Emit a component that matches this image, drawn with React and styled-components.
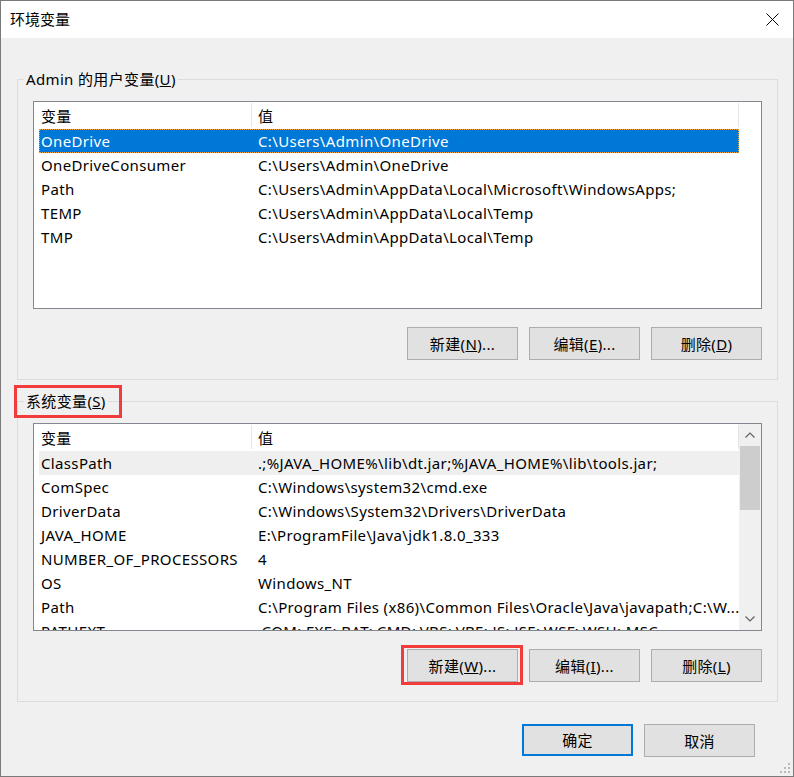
import styled, { createGlobalStyle, css } from 'styled-components'

const GlobalStyle = createGlobalStyle`
  html, body {
    margin: 0;
    padding: 0;
    background: #f0f0f0;
  }
  * {
    box-sizing: border-box;
  }
`

const Window = styled.div`
  position: relative;
  width: 794px;
  height: 777px;
  border: 1px solid #7a7a7a;
  background: #f0f0f0;
  display: flex;
  flex-direction: column;
  font-family: "Segoe UI", "Noto Sans", "Noto Sans CJK SC", sans-serif;
  font-size: 15px;
  letter-spacing: 0.35px;
  color: #000;
`

const TitleBar = styled.div`
  height: 37px;
  flex-shrink: 0;
  background: #fff;
  display: flex;
  align-items: center;
  justify-content: space-between;
  padding: 0 14px 1px 9px;
`

const Title = styled.span`
  line-height: 20px;
  letter-spacing: 0;
`

const Body = styled.div`
  flex: 1;
  display: flex;
  flex-direction: column;
  padding: 30px 15px 0 16px;
`

const Group = styled.fieldset`
  margin: ${({ $gap }) => $gap || 0}px 0 0;
  padding: 11px 15px 19px;
  border: 1px solid #dcdcdc;
  min-width: 0;
`

const Legend = styled.legend`
  position: relative;
  margin-left: -9px;
  padding: 0 2px;
  line-height: 22px;

  ${({ $marked }) => $marked && css`
    &::after {
      content: '';
      position: absolute;
      left: -10px;
      top: -5px;
      right: -14px;
      bottom: -6px;
      border: 3px solid #f23b3b;
    }
  `}
`

const ListBox = styled.div`
  height: 208px;
  border: 1px solid #828790;
  background: #fff;
  display: flex;
  overflow: hidden;
`

const ListContent = styled.div`
  flex: 1;
  min-width: 0;
  padding-left: 5px;
  overflow: hidden;
`

const Columns = styled.div`
  display: grid;
  grid-template-columns: 213px 487px;
  width: 700px;
`

const HeaderRow = styled(Columns)`
  height: 27px;
`

const HeaderCell = styled.div`
  display: flex;
  align-items: center;
  padding-left: ${({ $first }) => ($first ? 2 : 6)}px;
  margin: 1px 0 2px;
  border-right: 1px solid #e5e5e5;
`

const Row = styled(Columns)`
  height: 24px;
  align-items: center;
  background: ${({ $selected, $hover }) =>
    $selected ? '#0078d7' : $hover ? '#efefef' : 'transparent'};
  color: ${({ $selected }) => ($selected ? '#fff' : '#000')};
  outline: ${({ $selected }) => ($selected ? '1px dotted #f4a23c' : 'none')};
  outline-offset: -1px;
`

const Cell = styled.div`
  padding-left: ${({ $first }) => ($first ? 2 : 6)}px;
  white-space: nowrap;
  overflow: hidden;
  line-height: 24px;
`

const ScrollBar = styled.div`
  width: 22px;
  flex-shrink: 0;
  background: #f0f0f0;
  display: flex;
  flex-direction: column;
`

const ScrollArrow = styled.div`
  height: 22px;
  display: flex;
  align-items: center;
  justify-content: center;
`

const ScrollThumb = styled.div`
  height: 64px;
  margin: 0 1px;
  background: #cdcdcd;
`

const ScrollTrack = styled.div`
  flex: 1;
`

const ButtonRow = styled.div`
  display: flex;
  justify-content: flex-end;
  gap: 11px;
  margin-top: 18px;
`

const Button = styled.button`
  position: relative;
  width: 111px;
  height: ${({ $primary }) => ($primary ? 32 : 33)}px;
  padding: 0;
  background: #e1e1e1;
  border: ${({ $primary }) => ($primary ? '2px solid #0078d7' : '1px solid #adadad')};
  font: inherit;
  letter-spacing: inherit;
  color: #000;
  line-height: 20px;

  ${({ $marked }) => $marked && css`
    &::after {
      content: '';
      position: absolute;
      left: -7px;
      top: -5px;
      right: -6px;
      bottom: -4px;
      border: 3px solid #f23b3b;
    }
  `}
`

const Footer = styled.div`
  display: flex;
  justify-content: flex-end;
  gap: 11px;
  margin-top: 22px;
  padding-right: 23px;
`

const Grip = styled.svg`
  position: absolute;
  right: 2px;
  bottom: 2px;
`

const userVars = [
  ['OneDrive', 'C:\\Users\\Admin\\OneDrive'],
  ['OneDriveConsumer', 'C:\\Users\\Admin\\OneDrive'],
  ['Path', 'C:\\Users\\Admin\\AppData\\Local\\Microsoft\\WindowsApps;'],
  ['TEMP', 'C:\\Users\\Admin\\AppData\\Local\\Temp'],
  ['TMP', 'C:\\Users\\Admin\\AppData\\Local\\Temp'],
]

const systemVars = [
  ['ClassPath', '.;%JAVA_HOME%\\lib\\dt.jar;%JAVA_HOME%\\lib\\tools.jar;'],
  ['ComSpec', 'C:\\Windows\\system32\\cmd.exe'],
  ['DriverData', 'C:\\Windows\\System32\\Drivers\\DriverData'],
  ['JAVA_HOME', 'E:\\ProgramFile\\Java\\jdk1.8.0_333'],
  ['NUMBER_OF_PROCESSORS', '4'],
  ['OS', 'Windows_NT'],
  ['Path', 'C:\\Program Files (x86)\\Common Files\\Oracle\\Java\\javapath;C:\\W...'],
  ['PATHEXT', '.COM;.EXE;.BAT;.CMD;.VBS;.VBE;.JS;.JSE;.WSF;.WSH;.MSC'],
]

const Chevron = ({ down }) => (
  <svg width="12" height="8" viewBox="0 0 12 8">
    <polyline
      points={down ? '1.5,1.5 6,6 10.5,1.5' : '1.5,6.5 6,2 10.5,6.5'}
      fill="none"
      stroke="#606060"
      strokeWidth="1.2"
    />
  </svg>
)

const VarList = ({ rows, selected, hover, scroll }) => (
  <ListBox>
    <ListContent>
      <HeaderRow>
        <HeaderCell $first>变量</HeaderCell>
        <HeaderCell>值</HeaderCell>
      </HeaderRow>
      {rows.map(([name, value], i) => (
        <Row key={name + i} $selected={i === selected} $hover={i === hover}>
          <Cell $first>{name}</Cell>
          <Cell>{value}</Cell>
        </Row>
      ))}
    </ListContent>
    {scroll && (
      <ScrollBar>
        <ScrollArrow><Chevron /></ScrollArrow>
        <ScrollThumb />
        <ScrollTrack />
        <ScrollArrow><Chevron down /></ScrollArrow>
      </ScrollBar>
    )}
  </ListBox>
)

export default function App() {
  return (
    <>
      <GlobalStyle />
      <Window>
        <TitleBar>
          <Title>环境变量</Title>
          <svg width="13" height="13" viewBox="0 0 13 13">
            <path d="M0.5 0.5 L12.5 12.5 M12.5 0.5 L0.5 12.5" stroke="#000" strokeWidth="1" />
          </svg>
        </TitleBar>
        <Body>
          <Group>
            <Legend>Admin 的用户变量(<u>U</u>)</Legend>
            <VarList rows={userVars} selected={0} />
            <ButtonRow>
              <Button>新建(<u>N</u>)...</Button>
              <Button>编辑(<u>E</u>)...</Button>
              <Button>删除(<u>D</u>)</Button>
            </ButtonRow>
          </Group>
          <Group $gap={10}>
            <Legend $marked>系统变量(<u>S</u>)</Legend>
            <VarList rows={systemVars} hover={0} scroll />
            <ButtonRow>
              <Button $marked>新建(<u>W</u>)...</Button>
              <Button>编辑(<u>I</u>)...</Button>
              <Button>删除(<u>L</u>)</Button>
            </ButtonRow>
          </Group>
          <Footer>
            <Button $primary>确定</Button>
            <Button>取消</Button>
          </Footer>
        </Body>
        <Grip width="12" height="12" viewBox="0 0 12 12">
          <rect x="9" y="1" width="2" height="2" fill="#b8b8b8" />
          <rect x="5" y="5" width="2" height="2" fill="#b8b8b8" />
          <rect x="9" y="5" width="2" height="2" fill="#b8b8b8" />
          <rect x="1" y="9" width="2" height="2" fill="#b8b8b8" />
          <rect x="5" y="9" width="2" height="2" fill="#b8b8b8" />
          <rect x="9" y="9" width="2" height="2" fill="#b8b8b8" />
        </Grip>
      </Window>
    </>
  )
}
